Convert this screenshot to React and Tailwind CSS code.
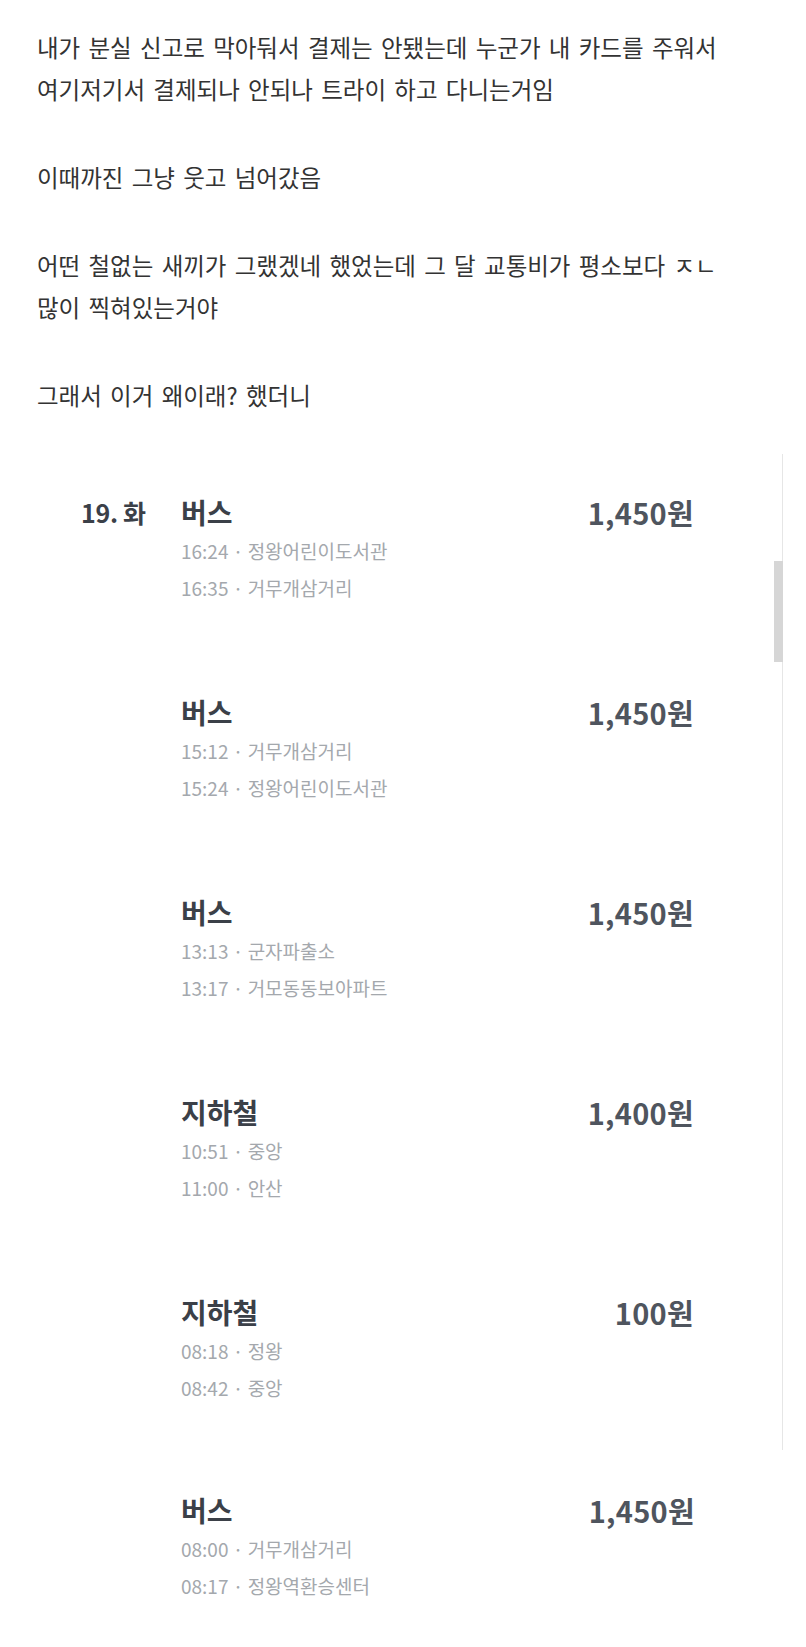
const FONT = "font-['Noto_Sans_CJK_KR','Noto_Sans',sans-serif]";

const paragraphs = [
  ['내가 분실 신고로 막아둬서 결제는 안됐는데 누군가 내 카드를 주워서', '여기저기서 결제되나 안되나 트라이 하고 다니는거임'],
  ['이때까진 그냥 웃고 넘어갔음'],
  ['어떤 철없는 새끼가 그랬겠네 했었는데 그 달 교통비가 평소보다 ㅈㄴ', '많이 찍혀있는거야'],
  ['그래서 이거 왜이래? 했더니'],
];

const rides = [
  { date: '19. 화', kind: '버스', amount: '1,450원', from: '16:24 · 정왕어린이도서관', to: '16:35 · 거무개삼거리' },
  { kind: '버스', amount: '1,450원', from: '15:12 · 거무개삼거리', to: '15:24 · 정왕어린이도서관' },
  { kind: '버스', amount: '1,450원', from: '13:13 · 군자파출소', to: '13:17 · 거모동동보아파트' },
  { kind: '지하철', amount: '1,400원', from: '10:51 · 중앙', to: '11:00 · 안산' },
  { kind: '지하철', amount: '100원', from: '08:18 · 정왕', to: '08:42 · 중앙' },
  { kind: '버스', amount: '1,450원', from: '08:00 · 거무개삼거리', to: '08:17 · 정왕역환승센터' },
];

function Ride({ ride, className = '' }) {
  return (
    <div className={`flex pl-[81px] pr-[88px] pt-[12px] ${className}`}>
      <div className="w-[100px] shrink-0 text-[25px] leading-[36px] font-bold text-[#3b4048] tracking-[-0.3px]">
        {ride.date || ''}
      </div>
      <div className="flex-1">
        <div className="text-[28px] leading-[36px] font-bold text-[#3b4048]">{ride.kind}</div>
        <div className="mt-[2px] text-[19px] leading-[37px] text-[#a4a8ad]">{ride.from}</div>
        <div className="text-[19px] leading-[37px] text-[#a4a8ad]">{ride.to}</div>
      </div>
      <div className="text-[29px] leading-[36px] font-semibold text-[#4f555e] tracking-[0.3px]">{ride.amount}</div>
    </div>
  );
}

export default function App() {
  const inBox = rides.slice(0, 5);
  const last = rides[5];

  return (
    <div className={`w-[806px] min-h-[1647px] bg-white ${FONT}`}>
      <div className="pl-[37px] pt-[26px] text-[23.5px] leading-[42px] text-[#333333] [word-spacing:3px]">
        {paragraphs.map((lines, i) => (
          <div key={i} className={i ? 'mt-[46px]' : ''}>
            {lines.map((l) => (
              <p key={l}>{l}</p>
            ))}
          </div>
        ))}
      </div>

      <div className="relative mt-[38px] w-[783px] h-[996px] border-r border-[#e6e6e6] pt-[28px]">
        <div className="absolute right-[-1px] top-[107px] w-[9px] h-[101px] bg-[#d6d6d6]" />
        {inBox.map((r, i) => (
          <Ride key={i} ride={r} className={i < 4 ? 'h-[200px]' : 'h-[168px]'} />
        ))}
      </div>
      <div className="w-[783px]">
        <Ride ride={last} className="mt-[30px] h-[200px]" />
      </div>
    </div>
  );
}
